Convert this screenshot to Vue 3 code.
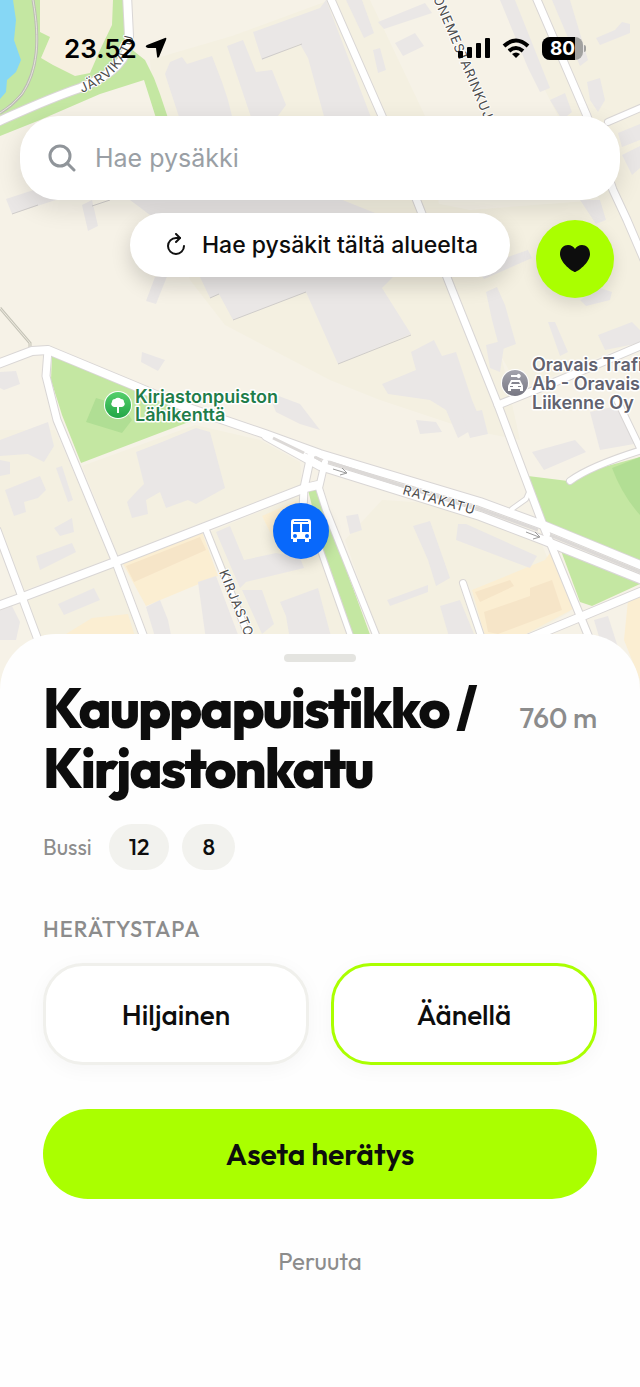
<script setup>
import {ref} from 'vue'

//STATE
const search = ref('')
const alarmMode = ref('sound')

const stop = {
  name: 'Kauppapuistikko / Kirjastonkatu',
  distance: '760 m',
  type: 'Bussi',
  lines: ['12', '8']
}

const alarmModes = [
  {value: 'silent', label: 'Hiljainen'},
  {value: 'sound', label: 'Äänellä'}
]

//MAP DATA

//yards around the houses, slightly darker than the ground
const yards = [
  '232,36 330,0 370,0 425,116 440,210 500,350 520,440 470,430 380,400 330,380 225,325 190,280 160,180 150,60',
  '510,0 640,0 640,340 520,390 470,300 420,200 470,210 600,200 540,80',
  '0,430 55,430 112,558 20,592 0,540',
  '82,466 195,425 260,440 300,462 302,484 205,522 118,556',
  '25,602 115,566 140,640 40,640',
  '210,532 300,495 350,640 255,640',
  '382,500 460,505 540,540 570,612 520,640 380,640 345,540'
]

const buildings = [
  '165,74 170,62 182,57 187,64 212,56 222,82 228,100 233,120 180,120',
  '227,46 243,40 256,72 272,70 286,105 275,120 252,120',
  '253,32 320,8 326,0 330,10 372,120 325,120 308,58 300,44 262,60',
  '346,0 362,0 374,33 364,38',
  '378,22 425,3 432,13 384,29',
  '395,43 415,33 424,46 403,56',
  '373,50 380,48 386,70 378,73',
  '500,0 515,0 550,88 540,92 528,68',
  '552,0 570,0 588,60 580,66',
  '596,38 615,30 622,22 630,24 630,33 600,45',
  '587,82 600,78 605,100 598,112 590,100',
  '550,100 565,93 572,112 562,120',
  '618,133 640,124 640,140 622,147',
  '622,155 640,146 640,168 632,175',
  '6,199 52,184 62,198 12,214',
  '82,205 92,200 98,226 88,231',
  '155,277 168,274 156,304 146,301',
  '142,352 165,360 158,371 141,362',
  '0,372 16,371 20,384 4,390 0,388',
  '130,200 330,195 380,215 398,272 382,288 411,334 338,364 306,292 233,320 219,294 210,298 200,277 190,230 150,215',
  '382,384 416,370 411,352 434,340 442,356 456,352 472,400 482,424 458,438 446,410 430,400 388,394',
  '486,292 497,287 505,305 516,344 500,350 492,320',
  '476,268 528,250 532,258 484,279',
  '548,322 555,322 568,352 560,356',
  '598,335 632,322 640,330 640,343 605,350',
  '580,300 600,288 612,292 610,300 586,306',
  '486,345 505,340 500,372 490,368',
  '580,200 600,200 606,220 596,224',
  '0,440 48,422 54,446 44,462 28,454 0,456',
  '5,490 40,476 46,490 38,498 24,502 26,512 14,516',
  '56,468 62,466 73,500 68,502',
  '54,528 72,518 74,532 60,536',
  '36,556 72,543 76,552 40,570',
  '0,460 10,462 10,474 0,476',
  '136,452 162,442 196,428 210,432 225,488 196,504 188,500 166,508 160,492 146,500 148,514 132,518 127,502 138,490 144,484',
  '58,604 94,588 100,600 64,615',
  '146,607 160,600 168,620 172,640 156,640',
  '216,532 230,526 244,560 276,553 300,558 304,568 246,582 240,588',
  '198,582 216,576 240,640 206,640',
  '280,602 318,588 332,640 290,640 286,616',
  '0,610 12,606 20,622 16,640 0,640',
  '242,590 262,590 274,624 262,634 252,612',
  '346,516 358,514 362,530 350,534',
  '413,526 430,521 450,578 436,586 428,560',
  '458,524 466,524 537,556 530,568 456,540',
  '387,600 428,585 428,592 390,606',
  '440,606 460,600 474,634 450,640',
  '532,452 575,440 586,452 544,470',
  '590,412 626,404 634,444 600,450',
  '416,420 436,422 442,432 420,434',
  '462,414 482,410 488,434 470,438',
  '594,620 608,616 622,660 606,660',
  '268,392 300,404 320,430 300,424 276,412'
]

//school yards and the houses in them
const schoolYards = [
  '122,562 202,532 218,576 146,606',
  '66,634 92,618 128,614 136,640 70,640',
  '262,516 298,500 300,556 280,552',
  '472,590 545,560 552,550 575,608 526,634 486,640',
  '628,600 640,594 640,680 624,640'
]
const schoolBuildings = [
  '126,566 200,537 206,550 134,582',
  '475,592 510,580 514,586 480,602',
  '484,612 530,596 530,588 552,580 562,610 498,634 488,632'
]

const parks = [
  '0,0 124,0 130,48 145,60 154,78 160,94 168,118 156,118 144,80 100,94 40,120 0,136',
  '52,356 130,386 190,412 194,420 81,463 62,415 51,380',
  '308,490 320,487 328,520 372,640 355,640 326,562',
  '528,476 568,481 600,468 640,457 640,562 546,522',
  '560,548 640,584 592,606 580,602'
]

const roads = [
  {d: 'M127 -5 L129 36 C130 62 106 78 80 88 C50 98 20 112 -5 123', width: 8},
  {d: 'M329 -5 L382 116 L415 196 L452 290 L498 405 L543 525 L590 640', width: 7},
  {d: 'M535 -5 L587 116 L613 190 L627 220 L645 262', width: 7},
  {d: 'M608 122 L645 106', width: 6},
  {d: 'M498 405 L560 380 L645 344', width: 7},
  {d: 'M617 400 L640 448', width: 6},
  {d: 'M645 449 Q590 466 570 481', width: 6},
  {d: 'M-5 365 L32 351 L48 350 L130 384 L180 405 L265 434 L320 454 L400 478 L480 502 L543 525 L645 567', width: 8},
  {d: 'M266 436 L320 466 L400 491 L480 516 L543 540 L645 581', width: 8},
  {d: 'M48 350 L46 376 L57 420 L115 560 L145 640', width: 7},
  {d: 'M-5 607 L20 598 L115 562 L205 527 L305 488 L318 485', width: 8},
  {d: 'M-3 530 L22 597 L38 640', width: 7},
  {d: 'M206 530 L250 640', width: 6},
  {d: 'M311 455 L304 488 L303 510', width: 7},
  {d: 'M325 462 L319 488 L326 510 L378 640', width: 6},
  {d: 'M308 515 L352 640', width: 5},
  {d: 'M512 509 L526 499 L530 490', width: 4},
  {d: 'M463 583 L484 645', width: 6},
  {d: 'M520 642 L578 618 L645 590', width: 8}
]
</script>

<template>
  <main class="screen">
    <section class="map-area">
      <svg class="map" viewBox="0 0 640 690" preserveAspectRatio="xMidYMin slice" role="img" aria-label="Kartta">
        <defs>
          <linearGradient id="poi-green" x1="0" y1="0" x2="0" y2="1">
            <stop offset="0" stop-color="#55cf6b" />
            <stop offset="1" stop-color="#23a647" />
          </linearGradient>
          <linearGradient id="poi-gray" x1="0" y1="0" x2="0" y2="1">
            <stop offset="0" stop-color="#a3a3ad" />
            <stop offset="1" stop-color="#777783" />
          </linearGradient>
          <path id="jarvikatu" d="M82 93 C104 84 122 70 132 44 L138 20" />
        </defs>
        <rect width="640" height="690" fill="#f6f2e7" />
        <polygon v-for="p in yards" :key="p" :points="p" fill="#f4f0e1" />
        <polygon v-for="p in parks" :key="p" :points="p" fill="#c4e7a2" />
        <path d="M0 0 H13 L16 20 L14 40 L21 60 L16 72 L7 80 L6 92 L0 99 Z" fill="#86d7f5" />
        <path d="M40 0 H113 L112 25 L100 50 L90 73 L75 76 L53 65 L41 58 L50 37 L40 32 Z" fill="#f6f0e0" />
        <path d="M612 468 L640 457 V515 Q622 495 612 468 Z" fill="#b2de94" />
        <path d="M96 398 L123 406 L132 420 L122 433 L86 422 Z" fill="#b0de94" />
        <polygon v-for="p in schoolYards" :key="p" :points="p" fill="#fbeed2" />
        <polygon v-for="p in buildings" :key="p" :points="p" fill="#eae7e6" />
        <polygon v-for="p in schoolBuildings" :key="p" :points="p" fill="#f6e5c8" />
        <g fill="none" stroke="#cfccca" stroke-width="1">
          <path d="M233 320 L306 292 M338 364 L411 335 M262 59 L302 44 M92 206 L110 200 M12 214 L38 205 M210 298 L219 294" />
        </g>
        <path d="M33 0 C40 40 38 70 22 94 Q12 106 0 113" fill="none" stroke="#bcbcb4" stroke-width="3" />
        <path d="M33 0 C40 40 38 70 22 94 Q12 106 0 113" fill="none" stroke="#e6e4dc" stroke-width="1" />
        <path d="M0 308 L30 343 V352" fill="none" stroke="#c6c4b8" stroke-width="3" />
        <path d="M0 308 L30 343 V352" fill="none" stroke="#eeebe0" stroke-width="1" />
        <!-- all outlines first so that the crossings stay open -->
        <g fill="none" stroke="#d9d6d5" stroke-linejoin="round" stroke-linecap="round">
          <path v-for="r in roads" :key="r.d" :d="r.d" :stroke-width="r.width + 2" />
        </g>
        <g fill="none" stroke="#fff" stroke-linejoin="round" stroke-linecap="round">
          <path v-for="r in roads" :key="r.d" :d="r.d" :stroke-width="r.width" />
        </g>
        <!-- median of Ratakatu -->
        <path d="M273 438 L304 453 M315 457 L321 460 M329 462 L400 485 L480 509 L538 530 M550 535 L645 574" fill="none" stroke="#dcd9d7" stroke-width="3" />
        <g fill="none" stroke="#9b9b9b" stroke-width="1">
          <path d="M333 469 L346 473 M342 468 L347 473 L340 475" />
          <path d="M526 532 L539 537 M535 532 L540 537 L533 539" />
        </g>

        <g class="street">
          <text><textPath href="#jarvikatu">JÄRVIKATU</textPath></text>
          <text transform="translate(433 -2) rotate(67)">ONEMESTARINKUJA</text>
          <text transform="translate(402 494) rotate(16)">RATAKATU</text>
          <text transform="translate(219 572) rotate(68)">KIRJASTONKATU</text>
        </g>

        <g class="poi poi-park">
          <circle cx="118" cy="405" r="14" fill="#fff" />
          <circle cx="118" cy="405" r="13" fill="url(#poi-green)" />
          <path d="M117 413 V407 H114 A3 3 0 0 1 112 402 A3 3 0 0 1 115 399 A4 4 0 0 1 121 399 A3 3 0 0 1 124 402 A3 3 0 0 1 122 407 H119 V413 Z" fill="#fff" />
          <text x="135" y="403">Kirjastonpuiston</text>
          <text x="135" y="421">Lähikenttä</text>
        </g>
        <g class="poi poi-traffic">
          <circle cx="515" cy="383" r="14" fill="#fff" />
          <circle cx="515" cy="383" r="13" fill="url(#poi-gray)" />
          <path d="M511 380 H520 L522 384 Q523 385 523 387 V391 H520 V389 H511 V391 H508 V387 Q508 385 509 384 Z" fill="#fff" />
          <path d="M512 382 H519 L520 384 H511 Z M510 386 H513 V387 H510 Z M518 386 H521 V387 H518 Z" fill="#858590" />
          <path d="M511 377 H517 A2 2 0 1 0 517 375 H511 Z" fill="#fff" />
          <text x="532" y="371">Oravais Trafik</text>
          <text x="532" y="390">Ab - Oravais</text>
          <text x="532" y="409">Liikenne Oy</text>
        </g>
      </svg>

      <button class="pin" type="button" aria-label="Bussipysäkki">
        <svg viewBox="0 0 24 26" width="24" height="26">
          <path d="M5 1 H19 Q22 1 22 4 V21 H20 V24 H16 V21 H8 V24 H4 V21 H2 V4 Q2 1 5 1 Z" fill="#fff" />
          <path d="M5 3 H19 V4 H5 Z M4 6 H11 V14 H4 Z M13 6 H20 V14 H13 Z" fill="#0868fb" />
          <circle cx="6" cy="18" r="2" fill="#0868fb" />
          <circle cx="18" cy="18" r="2" fill="#0868fb" />
        </svg>
      </button>

      <div class="overlay">
        <header class="status">
          <span class="clock">
            23.52
            <svg viewBox="0 0 22 22" width="22" height="22">
              <path d="M20 1 Q22 0 21 3 L14 20 Q12 22 12 19 L11 11 L3 11 Q-1 10 2 8 Z" fill="#000" />
            </svg>
          </span>
          <span class="indicators">
            <svg viewBox="0 0 32 20" width="32" height="20">
              <rect x="0" y="13" width="5" height="7" rx="1" />
              <rect x="9" y="9" width="5" height="11" rx="1" />
              <rect x="18" y="5" width="5" height="15" rx="1" />
              <rect x="27" y="0" width="5" height="20" rx="1" />
            </svg>
            <svg viewBox="0 0 28 20" width="28" height="20">
              <g fill="none" stroke="#000" stroke-width="4">
                <path d="M2 8 Q14 -3 26 8" />
                <path d="M7 13 Q14 7 21 13" />
              </g>
              <path d="M10 16 Q14 13 18 16 L14 20 Z" />
            </svg>
            <span class="battery"><span class="level">80</span></span>
          </span>
        </header>

        <label class="search">
          <svg viewBox="0 0 28 28" width="28" height="28" fill="none" stroke="#90959a" stroke-width="3" stroke-linecap="round">
            <circle cx="12" cy="12" r="10" />
            <path d="M19 19 L26 26" />
          </svg>
          <input v-model="search" type="search" placeholder="Hae pysäkki" aria-label="Hae pysäkki">
        </label>

        <div class="map-actions">
          <button class="reload" type="button">
            <svg viewBox="0 0 20 24" width="20" height="24" fill="none" stroke="#111" stroke-width="2" stroke-linecap="round" stroke-linejoin="round">
              <path d="M14 5 H10 A8 8 0 1 0 18 13" />
              <path d="M10 1 L14 5 L10 9" />
            </svg>
            Hae pysäkit tältä alueelta
          </button>
          <button class="favorites" type="button" aria-label="Suosikit">
            <svg viewBox="0 0 30 28" width="30" height="28">
              <path d="M15 27 C13 27 0 18 0 9 C0 3 4 0 8 0 C11 0 14 2 15 4 C16 2 19 0 22 0 C26 0 30 3 30 9 C30 18 17 27 15 27 Z" fill="#0d0d0d" />
            </svg>
          </button>
        </div>
      </div>
    </section>

    <section class="sheet">
      <div class="handle"></div>
      <div class="heading">
        <h1>{{stop.name}}</h1>
        <span class="distance">{{stop.distance}}</span>
      </div>
      <div class="lines">
        <span>{{stop.type}}</span>
        <b v-for="line in stop.lines" :key="line">{{line}}</b>
      </div>
      <fieldset>
        <legend>HERÄTYSTAPA</legend>
        <div class="options">
          <label v-for="mode in alarmModes" :key="mode.value" :class="{selected: alarmMode === mode.value}">
            <input v-model="alarmMode" type="radio" name="alarm-mode" :value="mode.value">
            {{mode.label}}
          </label>
        </div>
      </fieldset>
      <button class="primary" type="button">Aseta herätys</button>
      <button class="cancel" type="button">Peruuta</button>
    </section>
  </main>
</template>

<style>
body{
  background:#fefefe;
}
</style>

<style scoped>
*{
  box-sizing:border-box;
}
button, input{
  font-family:inherit;
  margin:0;
  padding:0;
  border:0;
}
button{
  cursor:pointer;
}
.screen{
  display:flex;
  flex-direction:column;
  min-height:100vh;
  font-family:Inter, "Liberation Sans", sans-serif;
  color:#0d0d0d;
}

/* map */
.map-area{
  position:relative;
  flex:1 0 auto;
  min-height:480px;
  overflow:hidden;
}
.map{
  position:absolute;
  inset:0;
  width:100%;
  height:100%;
}
.street{
  font-size:13px;
  letter-spacing:1px;
  fill:#4c4c4c;
  stroke:#fff;
  stroke-width:2px;
  paint-order:stroke;
  stroke-linejoin:round;
}
.poi text{
  font-size:18px;
  font-weight:600;
  stroke:#fff;
  stroke-width:3px;
  paint-order:stroke;
  stroke-linejoin:round;
}
.poi-park text{
  fill:#1f7d4a;
}
.poi-traffic text{
  fill:#62626f;
}
.pin{
  position:absolute;
  left:47%;
  top:77%;
  width:56px;
  height:56px;
  transform:translate(-50%, -50%);
  display:flex;
  align-items:center;
  justify-content:center;
  border-radius:50%;
  background:#0868fb;
  box-shadow:0 4px 14px rgba(0,0,0,0.2);
}
.overlay{
  position:relative;
  display:flex;
  flex-direction:column;
  padding:32px 20px 0;
}

/* status bar */
.status{
  display:flex;
  justify-content:space-between;
  align-items:center;
  height:32px;
  padding:0 37px 0 44px;
  margin-bottom:52px;
}
.clock{
  display:flex;
  align-items:center;
  gap:8px;
  font-size:26px;
  font-weight:600;
  color:#000;
}
.indicators{
  display:flex;
  align-items:center;
  gap:12px;
}
.battery{
  position:relative;
  display:flex;
  width:41px;
  height:23px;
  border-radius:8px;
  background:#a2a2a0;
}
.battery::after{
  content:"";
  position:absolute;
  left:42px;
  top:8px;
  width:2px;
  height:7px;
  border-radius:0 2px 2px 0;
  background:#a2a2a0;
}
.level{
  width:80%;
  padding-left:8px;
  border-radius:8px 0 0 8px;
  background:#000;
  color:#fff;
  font-size:19px;
  font-weight:700;
  line-height:23px;
}

/* search */
.search{
  display:flex;
  align-items:center;
  gap:19px;
  height:84px;
  padding:0 28px;
  border-radius:38px;
  background:#fff;
  box-shadow:0 8px 24px rgba(0,0,0,0.12);
}
.search input{
  flex:1;
  min-width:0;
  font-size:25px;
  background:none;
  outline:none;
}
.search input::placeholder{
  color:#9a9fa5;
}
.map-actions{
  display:grid;
  grid-template-columns:1fr auto 1fr;
  align-items:start;
  margin-top:13px;
}
.reload{
  grid-column:2;
  display:flex;
  align-items:center;
  gap:16px;
  height:64px;
  padding:0 32px 0 36px;
  border-radius:32px;
  background:#fff;
  color:#0d0d0d;
  font-size:23px;
  font-weight:500;
  white-space:nowrap;
  box-shadow:0 8px 20px rgba(0,0,0,0.16);
}
.favorites{
  justify-self:end;
  display:flex;
  align-items:center;
  justify-content:center;
  width:78px;
  height:78px;
  margin:7px 6px 0 0;
  border-radius:50%;
  background:#aaff00;
  box-shadow:0 6px 16px rgba(0,0,0,0.12);
}

/* bottom sheet */
.sheet{
  position:relative;
  display:flex;
  flex-direction:column;
  margin-top:-56px;
  padding:20px 43px 103px;
  border-radius:56px 56px 0 0;
  background:#fefefe;
  font-family:Outfit, Lato, sans-serif;
}
.handle{
  align-self:center;
  width:72px;
  height:8px;
  border-radius:4px;
  background:#e4e4e0;
}
.heading{
  display:flex;
  justify-content:space-between;
  align-items:baseline;
  gap:24px;
  margin-top:16px;
}
h1{
  flex:1;
  margin:0;
  font-size:55px;
  font-weight:800;
  line-height:60px;
  letter-spacing:-2px;
}
.distance{
  font-size:28px;
  font-weight:500;
  color:#8c8c8c;
}
.lines{
  display:flex;
  align-items:center;
  gap:13px;
  height:46px;
  margin-top:26px;
  font-size:22px;
  color:#8c8c8c;
}
.lines span{
  margin-right:4px;
}
.lines b{
  padding:0 20px;
  border-radius:23px;
  background:#f2f2ee;
  color:#0d0d0d;
  font-size:23px;
  font-weight:500;
  line-height:46px;
}
fieldset{
  min-width:0;
  margin:45px 0 0;
  padding:0;
  border:0;
}
legend{
  padding:0;
  font-size:22px;
  font-weight:500;
  line-height:28px;
  letter-spacing:1px;
  color:#8c8c8c;
}
.options{
  display:grid;
  grid-template-columns:1fr 1fr;
  gap:22px;
  margin-top:20px;
}
.options label{
  position:relative;
  display:flex;
  align-items:center;
  justify-content:center;
  height:102px;
  border:3px solid #f0f0ec;
  border-radius:40px;
  background:#fff;
  box-shadow:0 4px 20px rgba(0,0,0,0.04);
  font-size:28px;
  font-weight:500;
  cursor:pointer;
}
.options .selected{
  border-color:#aaff00;
}
.options input{
  position:absolute;
  opacity:0;
}
.primary{
  height:90px;
  margin-top:44px;
  border-radius:45px;
  background:#aaff00;
  color:#0d0d0d;
  font-size:30px;
  font-weight:600;
}
.cancel{
  align-self:center;
  height:46px;
  margin-top:39px;
  background:none;
  color:#8c8c8c;
  font-size:24px;
}
</style>
